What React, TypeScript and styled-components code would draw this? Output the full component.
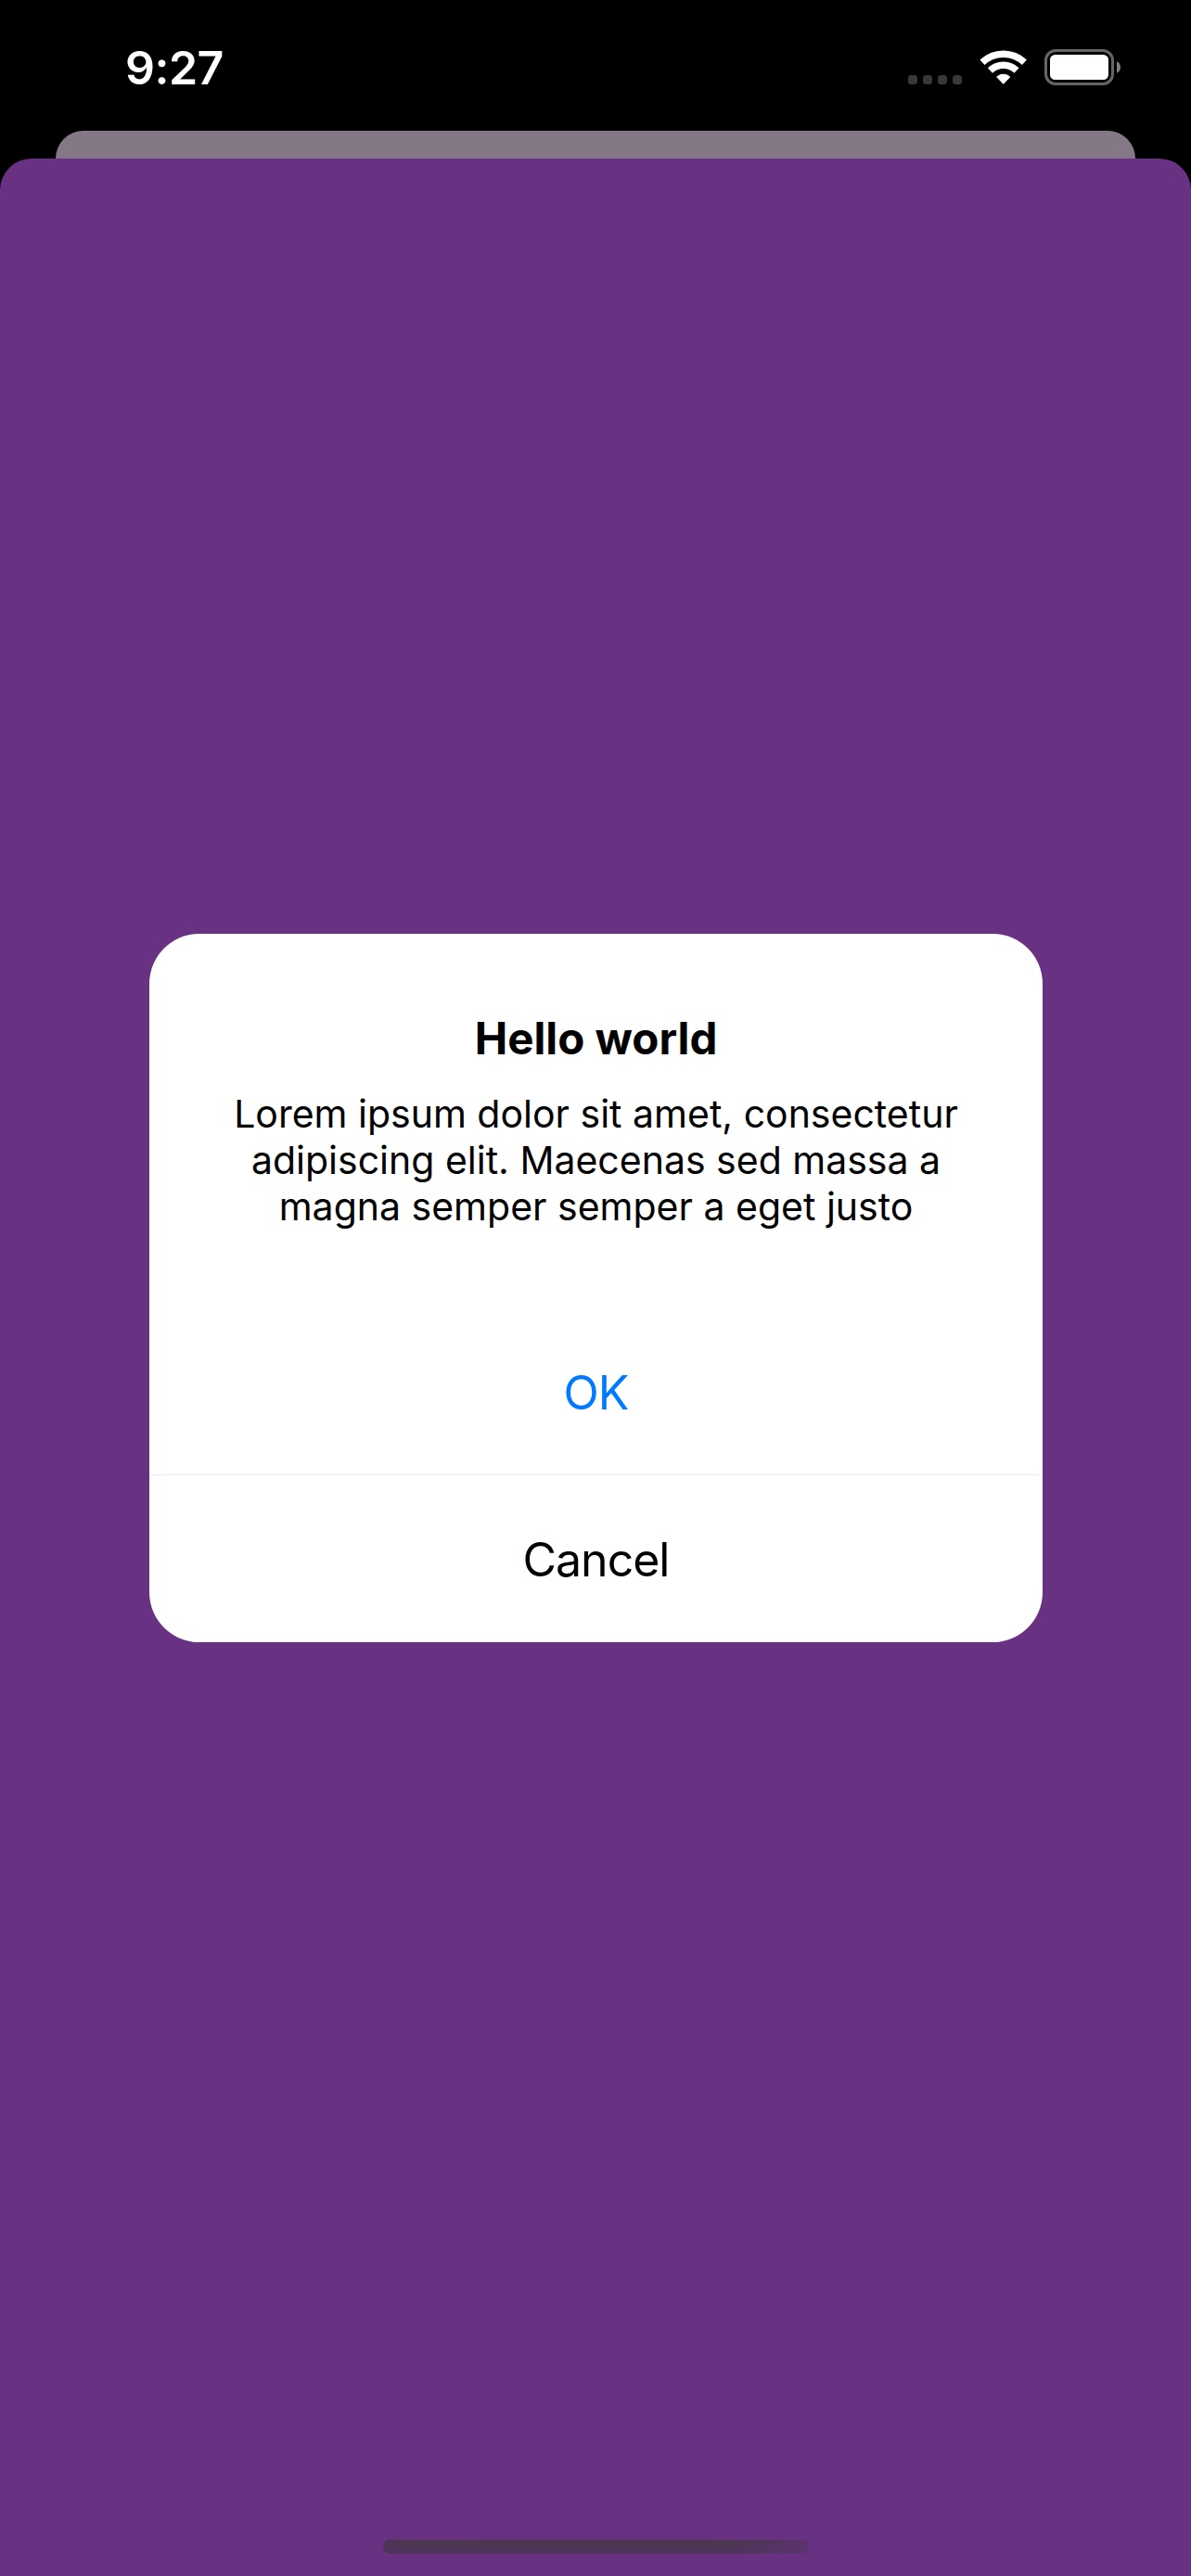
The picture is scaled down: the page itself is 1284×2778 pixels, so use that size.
import React from 'react';
import styled, { createGlobalStyle } from 'styled-components';

const GlobalStyle = createGlobalStyle`
  *, *::before, *::after { box-sizing: border-box; }
  html, body { margin: 0; padding: 0; background: #000; }
  body { font-family: Inter, "Liberation Sans", sans-serif; font-optical-sizing: none; }
`;

const Screen = styled.div`
  width: 1284px;
  height: 2778px;
  display: flex;
  flex-direction: column;
  background: #000;
  overflow: hidden;
`;

const StatusBar = styled.header`
  height: 141px;
  flex: none;
  display: flex;
  justify-content: space-between;
  align-items: flex-start;
  padding: 53px 75px 0 135px;
`;

const Time = styled.time`
  color: #fff;
  font-size: 50px;
  line-height: 40px;
  font-weight: 600;
  letter-spacing: -0.5px;
`;

const Indicators = styled.div`
  display: flex;
  align-items: flex-start;
  height: 40px;
`;

const Dots = styled.div`
  display: flex;
  gap: 6px;
  margin: 28px 19px 0 0;
`;

const Dot = styled.span`
  width: 10px;
  height: 10px;
  border-radius: 3.5px;
  background: #383838;
`;

const WifiIcon = styled.svg`
  width: 52px;
  height: 39px;
  margin-right: 18px;
`;

const BatteryIcon = styled.svg`
  width: 83px;
  height: 39px;
`;

const BackSheet = styled.div`
  height: 30px;
  flex: none;
  margin: 0 60px;
  border-radius: 31px 31px 0 0;
  background: #857886;
`;

const Sheet = styled.main`
  flex: 1;
  display: flex;
  flex-direction: column;
  justify-content: space-between;
  padding: 836px 161px 24px;
  border-radius: 34px 34px 0 0;
  background: #683182;
`;

const Dialog = styled.section`
  width: 963px;
  height: 764px;
  display: flex;
  flex-direction: column;
  border-radius: 54px;
  overflow: hidden;
  background: #fff;
  color: #000;
`;

const DialogBody = styled.div`
  height: 404px;
  padding-top: 84px;
  text-align: center;
`;

const Title = styled.h1`
  margin: 0;
  font-size: 47.5px;
  line-height: 58px;
  font-weight: 700;
  letter-spacing: 0;
`;

const Message = styled.p`
  margin: 27px 0 0;
  font-size: 41px;
  line-height: 50px;
  font-weight: 400;
`;

const Action = styled.button<{ $color: string }>`
  height: 180px;
  padding: 2px 0 0;
  border: 0;
  border-bottom: 1px solid #ebebeb;
  background: transparent;
  color: ${({ $color }) => $color};
  font-family: inherit;
  font-size: 50px;
  line-height: 60px;
  font-weight: 400;
  letter-spacing: -1px;
`;

const HomeIndicator = styled.div`
  width: 459px;
  height: 15px;
  margin-left: 252px;
  border-radius: 8px;
  background: linear-gradient(90deg, transparent 84%, rgba(104, 49, 130, 0.55) 100%),
    linear-gradient(#4a364f, #50355f);
`;

export default function App() {
  return (
    <Screen>
      <GlobalStyle />
      <StatusBar>
        <Time>9:27</Time>
        <Indicators>
          <Dots>
            <Dot />
            <Dot />
            <Dot />
            <Dot />
          </Dots>
          <WifiIcon viewBox="0 0 52 39" fill="none">
            <g stroke="#fff" strokeWidth="7.4">
              <path d="M3 14.3A32.9 32.9 0 0 1 48.4 14.3" />
              <path d="M11.4 23A20.7 20.7 0 0 1 40 23" />
            </g>
            <path
              d="M25.7 37.3L18.6 29.9A10.6 10.6 0 0 1 32.8 29.9Z"
              fill="#fff"
              stroke="#fff"
              strokeWidth="1"
              strokeLinejoin="round"
            />
          </WifiIcon>
          <BatteryIcon viewBox="0 0 83 39" fill="none">
            <rect x="1.5" y="1.5" width="72" height="36" rx="10.5" stroke="#666" strokeWidth="3" />
            <rect x="6" y="6" width="63" height="27" rx="5.5" fill="#fff" />
            <path d="M78 13.2C80.4 14.2 82 16.6 82 19.5S80.4 24.8 78 25.8Z" fill="#808080" />
          </BatteryIcon>
        </Indicators>
      </StatusBar>
      <BackSheet />
      <Sheet>
        <Dialog role="alertdialog">
          <DialogBody>
            <Title>Hello world</Title>
            <Message>
              Lorem ipsum dolor sit amet, consectetur
              <br />
              adipiscing elit. Maecenas sed massa a
              <br />
              magna semper semper a eget justo
            </Message>
          </DialogBody>
          <Action $color="#007aff">OK</Action>
          <Action $color="#000">Cancel</Action>
        </Dialog>
        <HomeIndicator />
      </Sheet>
    </Screen>
  );
}
